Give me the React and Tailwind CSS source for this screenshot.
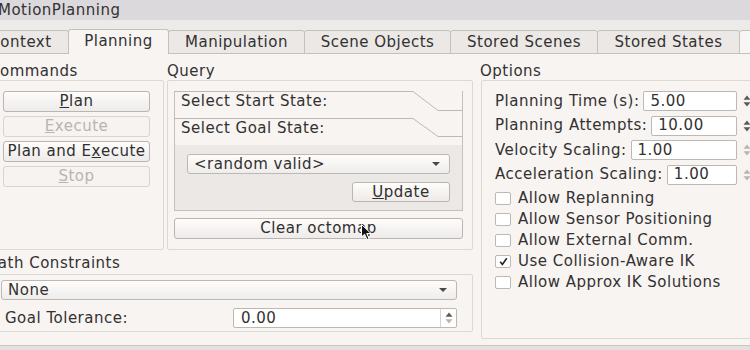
import React from "react";

function Btn({ children, disabled, className = "" }) {
  const base = "flex items-center justify-center rounded-[3px] border leading-none ";
  const look = disabled
    ? "border-[#d8d4d0] bg-[#f6f3f1] text-[#b8b4b0] "
    : "border-[#b9b5b1] bg-linear-to-b from-[#fefdfc] to-[#eeebe9] text-[#2f2f2f] ";
  return <div className={base + look + className}>{children}</div>;
}

function Arrows({ upLight = false, downLight = false }) {
  return (
    <svg width="8" height="12" viewBox="0 0 8 12">
      <path d="M4 0.5 L7.5 4.8 L0.5 4.8 Z" fill={upLight ? "#b9b5b1" : "#5c5a58"} />
      <path d="M4 11.5 L7.5 7.2 L0.5 7.2 Z" fill={downLight ? "#b9b5b1" : "#5c5a58"} />
    </svg>
  );
}

function Caret() {
  return (
    <svg width="10" height="6" viewBox="0 0 10 6">
      <path d="M1 1 L9 1 L5 5 Z" fill="#4a4846" />
    </svg>
  );
}

function SpinRow({ label, value, upLight }) {
  return (
    <div className="flex items-center h-[20px] gap-[4px]">
      <span className="whitespace-nowrap">{label}</span>
      <div className="flex-1 h-[20px] bg-white border border-[#bcb8b4] rounded-[2px] pl-[6px] flex items-center leading-none">
        {value}
      </div>
      <div className="w-[11px] flex items-center justify-center">
        <Arrows upLight={upLight} downLight={upLight} />
      </div>
    </div>
  );
}

function Check({ label, checked }) {
  return (
    <div className="flex items-center h-[21px]">
      <div className="w-[16px] h-[13px] bg-white border border-[#bcb8b4] rounded-[2px] flex items-center justify-center">
        {checked && (
          <svg width="9" height="9" viewBox="0 0 9 9">
            <path d="M1.2 4.8 L3.4 7.4 L7.8 1.2" stroke="#222" strokeWidth="1.6" fill="none" />
          </svg>
        )}
      </div>
      <span className="ml-[7px] whitespace-nowrap">{label}</span>
    </div>
  );
}

function TabShape({ dy }) {
  return (
    <svg className="absolute left-[-1px] top-0" width="289" height="22" viewBox="0 0 289 22">
      <polyline
        points={`0,0.5 239,0.5 264,${dy + 0.5} 289,${dy + 0.5}`}
        fill="none"
        stroke="#bdb9b5"
        strokeWidth="1"
      />
    </svg>
  );
}

export default function App() {
  return (
    <div className="w-[750px] h-[350px] overflow-hidden bg-[#f7f4f2] font-['DejaVu_Sans',sans-serif] text-[15px] tracking-[0.5px] text-[#333131] flex flex-col relative">
      {/* title bar */}
      <div className="h-[20px] shrink-0 bg-[#dbd9db] leading-[20px]">
        <span className="ml-[-2px] block">MotionPlanning</span>
      </div>

      {/* tab strip */}
      <div className="h-[34px] shrink-0 bg-[#edebea] flex items-end">
        <div className="flex items-end ml-[-28px]">
          <div className="w-[97px] h-[24px] border border-[#c4c0bc] bg-[#ebe8e6] rounded-t-[3px] flex items-center justify-center leading-none">
            Context
          </div>
          <div className="w-[101px] -ml-px h-[25px] border-x border-t border-[#c4c0bc] bg-[#f7f4f2] rounded-t-[3px] flex items-center justify-center leading-none relative z-10 pb-[1px]">
            Planning
          </div>
          <div className="w-[137px] -ml-px h-[24px] border border-[#c4c0bc] bg-[#ebe8e6] rounded-t-[3px] flex items-center justify-center leading-none">
            Manipulation
          </div>
          <div className="w-[147px] -ml-px h-[24px] border border-[#c4c0bc] bg-[#ebe8e6] rounded-t-[3px] flex items-center justify-center leading-none">
            Scene Objects
          </div>
          <div className="w-[148px] -ml-px h-[24px] border border-[#c4c0bc] bg-[#ebe8e6] rounded-t-[3px] flex items-center justify-center leading-none">
            Stored Scenes
          </div>
          <div className="w-[143px] -ml-px h-[24px] border border-[#c4c0bc] bg-[#ebe8e6] rounded-t-[3px] flex items-center justify-center leading-none">
            Stored States
          </div>
          <div className="w-[40px] -ml-px h-[24px] border border-[#c4c0bc] bg-[#f8f6f5] rounded-t-[3px]" />
        </div>
      </div>

      {/* content */}
      <div className="flex-1 flex">
        {/* left column */}
        <div className="ml-[-11px] w-[484px] shrink-0 flex flex-col">
          <div className="flex gap-[3px]">
            {/* Commands */}
            <div className="w-[175px] flex flex-col">
              <div className="h-[26px] pt-[8px] leading-[18px]">Commands</div>
              <div className="h-[170px] border border-[#dcd8d4] rounded-[2px] pl-[13px] pt-[10px] flex flex-col gap-[4px]">
                <Btn className="w-[147px] h-[21px]">
                  <span className="underline">P</span>lan
                </Btn>
                <Btn disabled className="w-[147px] h-[21px]">
                  <span className="underline">E</span>xecute
                </Btn>
                <Btn className="w-[147px] h-[21px] whitespace-nowrap">
                  Plan and E<span className="underline">x</span>ecute
                </Btn>
                <Btn disabled className="w-[147px] h-[21px]">
                  <span className="underline">S</span>top
                </Btn>
              </div>
            </div>

            {/* Query */}
            <div className="w-[306px] flex flex-col">
              <div className="h-[26px] pt-[8px] leading-[18px]">Query</div>
              <div className="h-[170px] border border-[#dcd8d4] rounded-[2px] pl-[6px] pt-[10px] flex flex-col">
                <div className="w-[289px] border-x border-b border-[#c4c0bc] flex flex-col">
                  <div className="h-[27px] relative pl-[6px] pt-[1px] leading-[18px] whitespace-nowrap">
                    <TabShape dy={19} />
                    Select Start State:
                  </div>
                  <div className="h-[27px] relative pl-[6px] pt-[1px] leading-[18px] whitespace-nowrap">
                    <TabShape dy={18} />
                    Select Goal State:
                  </div>
                  <div className="bg-[#ebe8e5] px-[12px] pt-[9px] pb-[8px] flex flex-col items-end gap-[8px]">
                    <div className="w-full h-[20px] bg-linear-to-b from-[#fefdfc] to-[#efedeb] border border-[#bcb8b4] rounded-[3px] pl-[6px] pr-[8px] flex items-center justify-between leading-none">
                      <span>&lt;random valid&gt;</span>
                      <Caret />
                    </div>
                    <Btn className="w-[98px] h-[20px]">
                      <span className="underline">U</span>pdate
                    </Btn>
                  </div>
                </div>
                <Btn className="w-[289px] h-[21px] mt-[7px]">Clear octomap</Btn>
              </div>
            </div>
          </div>

          {/* Path Constraints */}
          <div className="h-[24px] pt-[4px] leading-[18px]">Path Constraints</div>
          <div className="w-[484px] h-[58px] border border-[#dcd8d4] rounded-[2px] pl-[11px] pr-[15px] pt-[5px] flex flex-col">
            <div className="h-[20px] bg-linear-to-b from-[#fefdfc] to-[#efedeb] border border-[#bcb8b4] rounded-[3px] pl-[6px] pr-[8px] flex items-center justify-between leading-none">
              <span>None</span>
              <Caret />
            </div>
            <div className="mt-[8px] h-[20px] flex items-center justify-between">
              <span className="pl-[4px]">Goal Tolerance:</span>
              <div className="w-[224px] h-[20px] bg-white border border-[#bcb8b4] rounded-[2px] flex">
                <div className="flex-1 pl-[7px] flex items-center leading-none">0.00</div>
                <div className="w-[16px] border-l border-[#d6d2ce] flex items-center justify-center">
                  <Arrows downLight />
                </div>
              </div>
            </div>
          </div>
        </div>

        {/* Options */}
        <div className="ml-[8px] w-[280px] shrink-0 flex flex-col">
          <div className="h-[26px] pt-[8px] leading-[18px] ml-[-1px]">Options</div>
          <div className="h-[259px] border border-[#dcd8d4] rounded-[2px] pl-[13px] pr-[8px] pt-[10px] flex flex-col">
            <div className="flex flex-col gap-[4.5px]">
              <SpinRow label="Planning Time (s):" value="5.00" />
              <SpinRow label="Planning Attempts:" value="10.00" />
              <SpinRow label="Velocity Scaling:" value="1.00" upLight />
              <SpinRow label="Acceleration Scaling:" value="1.00" upLight />
            </div>
            <div className="mt-[3px] flex flex-col">
              <Check label="Allow Replanning" />
              <Check label="Allow Sensor Positioning" />
              <Check label="Allow External Comm." />
              <Check label="Use Collision-Aware IK" checked />
              <Check label="Allow Approx IK Solutions" />
            </div>
          </div>
        </div>
      </div>

      {/* bottom strip */}
      <div className="h-[5px] shrink-0 bg-[#e3e0de] border-t border-[#cbc7c3]" />

      {/* mouse cursor */}
      <svg className="absolute left-[361px] top-[224px]" width="12" height="17" viewBox="0 0 12 17">
        <path d="M0.5 0.5 L0.5 13 L3.6 10.2 L6 15.5 L8 14.6 L5.7 9.5 L10 9.5 Z" fill="#111" stroke="#fff" strokeWidth="1" />
      </svg>
    </div>
  );
}
